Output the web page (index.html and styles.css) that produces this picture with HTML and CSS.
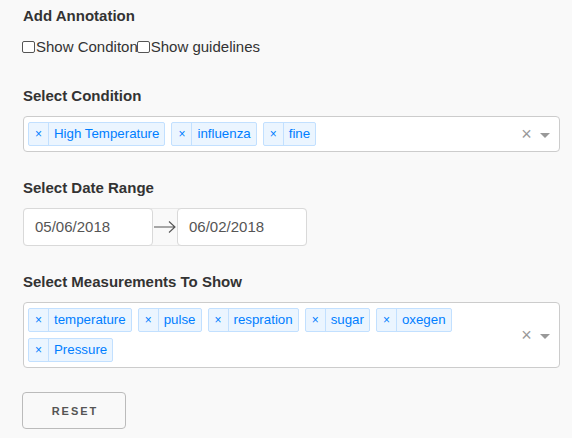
FILE: index.html
```html
<!DOCTYPE html>
<html>
<head>
<meta charset="utf-8">
<link rel="stylesheet" href="styles.css">
</head>
<body>
<div class="panel">
  <h3 class="title">Add Annotation</h3>
  <div class="checks">
    <label class="check"><span class="box"></span>Show Conditon</label><label class="check"><span class="box"></span>Show guidelines</label>
  </div>

  <h3 class="label label-first">Select Condition</h3>
  <div class="select">
    <div class="values">
      <span class="tag"><span class="tag-x">×</span><span class="tag-label">High Temperature</span></span>
      <span class="tag"><span class="tag-x">×</span><span class="tag-label">influenza</span></span>
      <span class="tag"><span class="tag-x">×</span><span class="tag-label">fine</span></span>
    </div>
    <span class="clear">×</span>
    <span class="arrow"></span>
  </div>

  <h3 class="label label-date">Select Date Range</h3>
  <div class="range">
    <div class="date">05/06/2018</div>
    <div class="range-sep">
      <svg width="24" height="14" viewBox="0 0 24 14"><path d="M1 7H22M16 1.5L22 7L16 12.5" fill="none" stroke="#555" stroke-width="1.1"/></svg>
    </div>
    <div class="date">06/02/2018</div>
  </div>

  <h3 class="label label-meas">Select Measurements To Show</h3>
  <div class="select">
    <div class="values">
      <span class="tag"><span class="tag-x">×</span><span class="tag-label">temperature</span></span>
      <span class="tag"><span class="tag-x">×</span><span class="tag-label">pulse</span></span>
      <span class="tag"><span class="tag-x">×</span><span class="tag-label">respration</span></span>
      <span class="tag"><span class="tag-x">×</span><span class="tag-label">sugar</span></span>
      <span class="tag"><span class="tag-x">×</span><span class="tag-label">oxegen</span></span>
      <span class="tag"><span class="tag-x">×</span><span class="tag-label">Pressure</span></span>
    </div>
    <span class="clear">×</span>
    <span class="arrow"></span>
  </div>

  <button class="reset">RESET</button>
</div>
</body>
</html>
```
FILE: styles.css
```css
html, body {
  margin: 0;
  padding: 0;
  background: #f9f9f9;
}
body {
  font-family: "Liberation Sans", Arial, sans-serif;
  color: #333;
}
.panel {
  padding: 6px 0 0 23px;
  width: 537px;
}
.title, .label {
  font-size: 15px;
  font-weight: bold;
  line-height: 20px;
  margin: 0;
  color: #333;
}
.checks {
  margin-top: 11px;
  line-height: 20px;
  font-size: 15px;
  color: #333;
}
.check {
  display: inline-flex;
  align-items: center;
}
.box {
  display: inline-block;
  width: 11px;
  height: 10px;
  border: 1px solid #555;
  border-radius: 2px;
  background: #fff;
  margin-left: -1px;
  margin-right: 1px;
}
.label {
  margin-bottom: 10px;
}
.label-first {
  margin-top: 28px;
}
.label-date {
  margin-top: 26px;
}
.label-meas {
  margin-top: 26px;
}
.select {
  display: flex;
  align-items: center;
  background: #fff;
  border: 1px solid #ccc;
  border-radius: 4px;
  min-height: 34px;
  box-sizing: border-box;
}
.values {
  flex: 1;
  display: flex;
  flex-wrap: wrap;
  gap: 6px 6px;
  padding: 5px 0 5px 4px;
}
.tag {
  display: inline-flex;
  height: 24px;
  box-sizing: border-box;
  border: 1px solid #c2e0ff;
  border-radius: 2px;
  background: #ebf5ff;
  color: #007eff;
  font-size: 13.3px;
  line-height: 22px;
}
.tag-x {
  width: 19px;
  text-align: center;
  border-right: 1px solid #c2e0ff;
  font-size: 12px;
}
.tag-label {
  padding: 0 5px;
}
.clear {
  color: #999;
  font-size: 18px;
  line-height: 18px;
  width: 17px;
  text-align: center;
  margin-right: 5px;
}
.arrow {
  width: 0;
  height: 0;
  border-left: 5px solid transparent;
  border-right: 5px solid transparent;
  border-top: 5px solid #999;
  margin: 2px 9px 0 0;
}
.range {
  display: flex;
  width: 284px;
  height: 38px;
  box-sizing: border-box;
  border: 1px solid #e6e6e6;
  border-radius: 4px;
}
.date {
  width: 130px;
  height: 38px;
  box-sizing: border-box;
  margin: -1px;
  border: 1px solid #d9d9d9;
  border-radius: 4px;
  background: #fff;
  font-size: 15px;
  line-height: 36px;
  padding-left: 11px;
  color: #555;
}
.range-sep {
  flex: 1;
  display: flex;
  align-items: center;
  justify-content: center;
  margin: 0 1px;
}
.reset {
  display: block;
  margin-top: 24px;
  margin-left: -1px;
  width: 104px;
  height: 37px;
  background: transparent;
  border: 1px solid #bbb;
  border-radius: 4px;
  font-family: "Liberation Sans", Arial, sans-serif;
  font-size: 11px;
  font-weight: bold;
  letter-spacing: 2px;
  color: #555;
  padding: 0 0 0 2px;
}
```
